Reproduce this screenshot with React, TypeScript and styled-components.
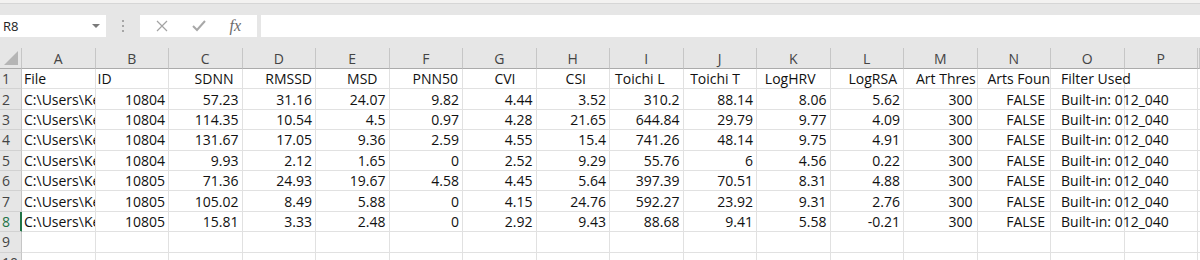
import React from 'react';
import styled, { createGlobalStyle } from 'styled-components';

const GlobalStyle = createGlobalStyle`
  html, body {
    margin: 0;
    padding: 0;
    background: #ffffff;
    overflow: hidden;
  }
  body {
    font-family: "Open Sans", "Noto Sans", Arial, sans-serif;
  }
`

const COL_W = 73.5
const ROW_H = 20.4
const LETTERS = 'ABCDEFGHIJKLMNOP'.split('')

const Window = styled.div`
  width: 1200px;
  height: 260px;
  display: flex;
  flex-direction: column;
  overflow: hidden;
  background: #e6e6e6;
`

const RibbonEdge = styled.div`
  height: 3px;
  background: #f3f2f1;
  border-bottom: 1px solid #d6d6d6;
  flex-shrink: 0;
`

const FormulaBar = styled.div`
  height: 44px;
  flex-shrink: 0;
  display: flex;
  align-items: center;
  padding-bottom: 1px;
  box-sizing: border-box;
`

const NameBox = styled.div`
  width: 106px;
  height: 22px;
  background: #ffffff;
  display: flex;
  align-items: center;
  justify-content: space-between;
  padding: 0 6px 0 3px;
  box-sizing: border-box;
  font-size: 13px;
  color: #222;
`

const Arrow = styled.span`
  width: 0;
  height: 0;
  border-left: 4px solid transparent;
  border-right: 4px solid transparent;
  border-top: 4px solid #7a7a7a;
`

const Grip = styled.div`
  width: 34px;
  display: flex;
  flex-direction: column;
  align-items: center;
  gap: 3px;
  & > span {
    width: 2px;
    height: 2px;
    background: #a6a6a6;
  }
`

const FxBox = styled.div`
  width: 117px;
  height: 22px;
  background: #ffffff;
  display: flex;
  align-items: center;
  justify-content: space-around;
  padding: 0 4px;
  box-sizing: border-box;
`

const Fx = styled.span`
  font-family: "Liberation Serif", "DejaVu Serif", serif;
  font-style: italic;
  font-size: 16px;
  color: #6b6b6b;
`

const FormulaInput = styled.div`
  flex: 1;
  height: 22px;
  margin-left: 4px;
  background: #ffffff;
`

const Sheet = styled.div`
  flex: 1;
  display: grid;
  grid-template-columns: 22px repeat(16, ${COL_W}px) 1fr;
  grid-template-rows: 21px;
  grid-auto-rows: ${ROW_H}px;
  background: #ffffff;
  font-size: 14px;
  color: #111;
`

const Corner = styled.div`
  background: #e6e6e6;
  border-right: 1px solid #c6c6c6;
  border-bottom: 1px solid #ababab;
  position: relative;
  &::after {
    content: '';
    position: absolute;
    right: 3px;
    bottom: 3px;
    width: 0;
    height: 0;
    border-left: 14px solid transparent;
    border-bottom: 14px solid #b5b5b5;
  }
`

const ColHead = styled.div`
  background: #e6e6e6;
  border-right: 1px solid #c6c6c6;
  border-bottom: 1px solid #ababab;
  display: flex;
  align-items: center;
  justify-content: center;
  font-size: 14px;
  color: #444;
`

const RowHead = styled.div<{ active?: boolean }>`
  background: #e6e6e6;
  border-right: 1px solid ${p => (p.active ? '#217346' : '#c6c6c6')};
  ${p => p.active && 'box-shadow: inset -1px 0 0 #217346;'}
  border-bottom: 1px solid #d2d2d2;
  display: flex;
  align-items: center;
  padding-left: 2px;
  font-size: 14px;
  color: ${p => (p.active ? '#217346' : '#444')};
`

const Cell = styled.div<{ align?: 'left' | 'right'; lead?: number; trail?: number; spill?: boolean }>`
  border-right: 1px solid #e1e1e1;
  border-bottom: 1px solid #e1e1e1;
  display: flex;
  align-items: center;
  justify-content: ${p => (p.align === 'right' ? 'flex-end' : 'flex-start')};
  padding: 0 ${p => p.trail ?? 3}px 0 ${p => p.lead ?? 2}px;
  white-space: nowrap;
  overflow: ${p => (p.spill ? 'visible' : 'hidden')};
  min-width: 0;
  position: relative;
  z-index: ${p => (p.spill ? 1 : 0)};
`

const Filler = styled.div`
  border-bottom: 1px solid #e1e1e1;
`

type Head = { text: string; align: 'left' | 'right'; lead?: number; trail?: number; spill?: boolean }

const header: Head[] = [
  { text: 'File', align: 'left' },
  { text: 'ID', align: 'left' },
  { text: 'SDNN', align: 'right', trail: 8 },
  { text: 'RMSSD', align: 'right', trail: 3 },
  { text: 'MSD', align: 'right', trail: 11 },
  { text: 'PNN50', align: 'right', trail: 4 },
  { text: 'CVI', align: 'right', trail: 20 },
  { text: 'CSI', align: 'right', trail: 23 },
  { text: 'Toichi L', align: 'right', trail: 18 },
  { text: 'Toichi T', align: 'right', trail: 16 },
  { text: 'LogHRV', align: 'right', trail: 14 },
  { text: 'LogRSA', align: 'right', trail: 6 },
  { text: 'Art Thres', align: 'left', lead: 12 },
  { text: 'Arts Foun', align: 'left', lead: 10 },
  { text: 'Filter Used', align: 'left', lead: 10, spill: true },
  { text: '', align: 'left' },
]

const rows: string[][] = [
  ['10804', '57.23', '31.16', '24.07', '9.82', '4.44', '3.52', '310.2', '88.14', '8.06', '5.62'],
  ['10804', '114.35', '10.54', '4.5', '0.97', '4.28', '21.65', '644.84', '29.79', '9.77', '4.09'],
  ['10804', '131.67', '17.05', '9.36', '2.59', '4.55', '15.4', '741.26', '48.14', '9.75', '4.91'],
  ['10804', '9.93', '2.12', '1.65', '0', '2.52', '9.29', '55.76', '6', '4.56', '0.22'],
  ['10805', '71.36', '24.93', '19.67', '4.58', '4.45', '5.64', '397.39', '70.51', '8.31', '4.88'],
  ['10805', '105.02', '8.49', '5.88', '0', '4.15', '24.76', '592.27', '23.92', '9.31', '2.76'],
  ['10805', '15.81', '3.33', '2.48', '0', '2.92', '9.43', '88.68', '9.41', '5.58', '-0.21'],
]

const App: React.FC = () => {
  return (
    <Window>
      <GlobalStyle />
      <RibbonEdge />
      <FormulaBar>
        <NameBox>
          R8
          <Arrow />
        </NameBox>
        <Grip>
          <span />
          <span />
          <span />
        </Grip>
        <FxBox>
          <svg width="12" height="12" viewBox="0 0 12 12">
            <path d="M1 1 L11 11 M11 1 L1 11" stroke="#a3a3a3" strokeWidth="1.2" />
          </svg>
          <svg width="14" height="12" viewBox="0 0 14 12">
            <path d="M1 6 L5 10 L13 1" stroke="#a8a8a8" strokeWidth="2" fill="none" />
          </svg>
          <Fx>fx</Fx>
        </FxBox>
        <FormulaInput />
      </FormulaBar>

      <Sheet>
        <Corner />
        {LETTERS.map(l => (
          <ColHead key={l}>{l}</ColHead>
        ))}
        <ColHead />

        <RowHead>1</RowHead>
        {header.map((h, i) => (
          <Cell key={i} align={h.align} lead={h.lead} trail={h.trail} spill={h.spill}>
            {h.text}
          </Cell>
        ))}
        <Filler />

        {rows.map((r, ri) => (
          <React.Fragment key={ri}>
            <RowHead active={ri === 6}>{ri + 2}</RowHead>
            <Cell>C:\Users\Ke</Cell>
            {r.map((v, ci) => (
              <Cell key={ci} align="right">
                {v}
              </Cell>
            ))}
            <Cell align="right" trail={4}>300</Cell>
            <Cell align="right" trail={5}>FALSE</Cell>
            <Cell spill lead={10}>Built-in: 012_040</Cell>
            <Cell />
            <Filler />
          </React.Fragment>
        ))}

        <RowHead>9</RowHead>
        {LETTERS.map(l => (
          <Cell key={l} />
        ))}
        <Filler />
        <RowHead>10</RowHead>
        {LETTERS.map(l => (
          <Cell key={l} />
        ))}
        <Filler />
      </Sheet>
    </Window>
  );
};

export default App;
